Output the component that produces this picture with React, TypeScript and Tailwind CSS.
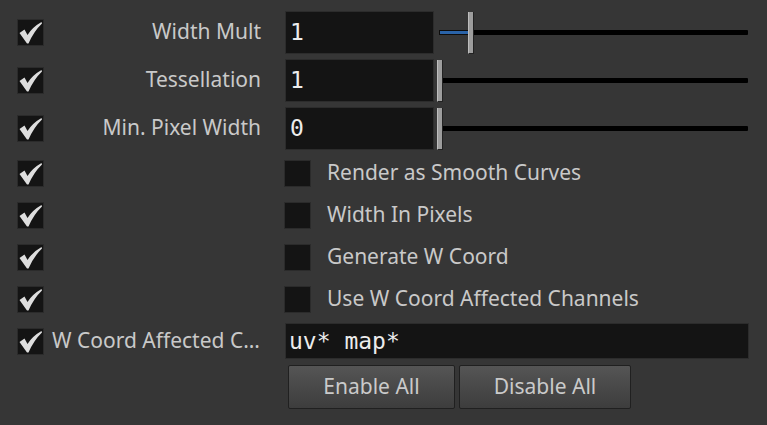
import React from 'react'

const sans = { fontFamily: '"Noto Sans", "Open Sans", sans-serif' }
const mono = { fontFamily: '"DejaVu Sans Mono", "Liberation Mono", monospace' }

function Check({ on }: { on: boolean }) {
  return (
    <div className="w-[27px] h-[27px] shrink-0 bg-[#141414] border border-[#2b2b2b] flex items-center justify-center">
      {on && (
        <svg width="25" height="25" viewBox="0 0 25 25">
          <path
            d="M1.5 13 L6.5 9.5 L9.5 15 Q14.5 7 23.5 2 L24 3.5 Q16 11 10.5 23.5 L9 23.5 Z"
            fill="#dedede"
          />
        </svg>
      )}
    </div>
  )
}

function Slider({ pos }: { pos: number }) {
  return (
    <div className="relative ml-[5px] w-[309px] h-[43px]">
      <div className="absolute left-0 right-0 top-[19px] h-[5px] bg-black rounded-[1px]" />
      {pos > 0 && (
        <div
          className="absolute left-0 top-[19px] h-[5px] bg-[#101820] border border-[#0c0c0c]"
          style={{ width: pos }}
        >
          <div className="h-full bg-[#2a63a8]" />
        </div>
      )}
      <div
        className="absolute top-[1px] w-[6px] h-[42px] bg-[#9d9d9d] border-r border-b border-[#222] border-l border-l-[#bdbdbd]"
        style={{ left: pos - 2 }}
      />
    </div>
  )
}

function NumRow({ label, value, pos }: { label: string; value: string; pos: number }) {
  return (
    <div className="flex items-center h-[48px]">
      <Check on />
      <div className="w-[218px] text-right text-[21px] text-[#c9c9c9] pr-[1px]">{label}</div>
      <div className="ml-[23px] w-[149px] h-[43px] bg-[#141414] border border-[#2c2c2c] flex items-center pl-[4px] text-[23px] text-[#ececec]" style={mono}>
        {value}
      </div>
      <Slider pos={pos} />
    </div>
  )
}

function ToggleRow({ label }: { label: string }) {
  return (
    <div className="flex items-center h-[42px]">
      <Check on />
      <div className="w-[240px]" />
      <Check on={false} />
      <div className="ml-[16px] text-[21px] text-[#c9c9c9]">{label}</div>
    </div>
  )
}

export default function App() {
  return (
    <div className="w-[767px] h-[425px] bg-[#363636] overflow-hidden pt-[8px] pl-[17px]" style={sans}>
      <NumRow label="Width Mult" value="1" pos={31} />
      <NumRow label="Tessellation" value="1" pos={0} />
      <NumRow label="Min. Pixel Width" value="0" pos={0} />
      <ToggleRow label="Render as Smooth Curves" />
      <ToggleRow label="Width In Pixels" />
      <ToggleRow label="Generate W Coord" />
      <ToggleRow label="Use W Coord Affected Channels" />
      <div className="flex items-center h-[42px]">
        <Check on />
        <div className="w-[218px] pl-[8px] text-[21px] text-[#c9c9c9] whitespace-nowrap">W Coord Affected C…</div>
        <div className="ml-[23px] w-[464px] h-[36px] bg-[#141414] border border-[#2c2c2c] flex items-center pl-[3px] text-[23px] text-[#ececec]" style={mono}>
          uv* map*
        </div>
      </div>
      <div className="flex gap-[4px] ml-[271px] mt-[3px]">
        <button className="w-[167px] h-[44px] rounded-[2px] border border-[#202020] bg-gradient-to-b from-[#555555] to-[#3d3d3d] text-[21px] text-[#cacaca]">
          Enable All
        </button>
        <button className="w-[172px] h-[44px] rounded-[2px] border border-[#202020] bg-gradient-to-b from-[#555555] to-[#3d3d3d] text-[21px] text-[#cacaca]">
          Disable All
        </button>
      </div>
    </div>
  )
}
